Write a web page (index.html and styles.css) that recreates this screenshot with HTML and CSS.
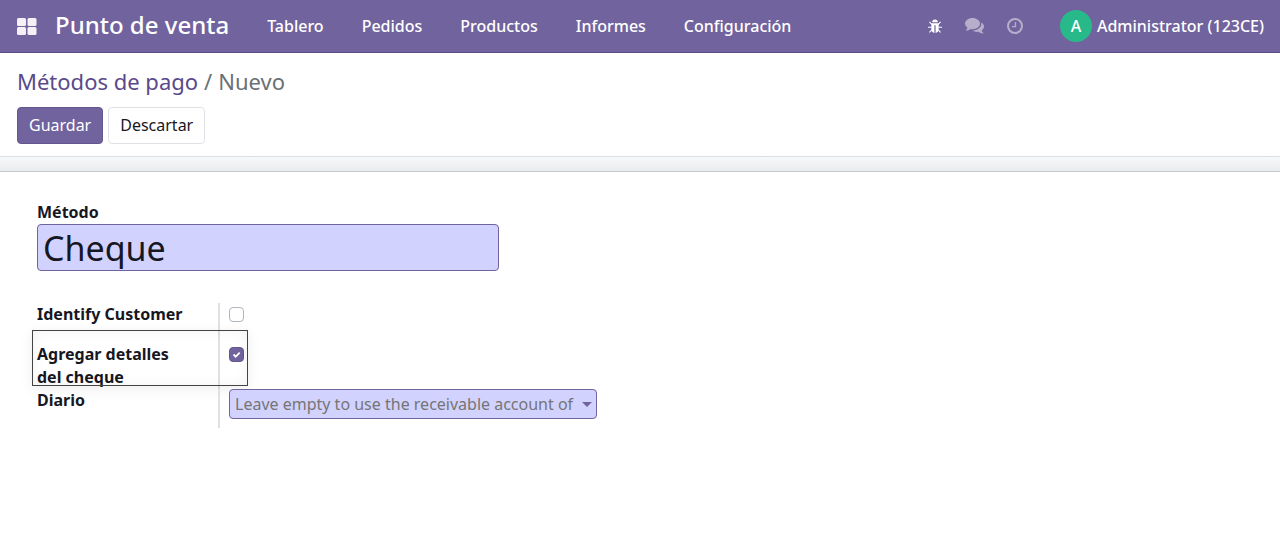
FILE: index.html
```html
<!DOCTYPE html>
<html lang="es">
<head>
<meta charset="utf-8">
<meta name="viewport" content="width=device-width, initial-scale=1">
<title>Métodos de pago</title>
<link rel="stylesheet" href="styles.css">
</head>
<body>
<header class="navbar">
  <button class="apps" type="button" aria-label="Aplicaciones">
    <svg width="20" height="17" viewBox="0 0 20 17" fill="#f3f1f6"><rect width="9" height="8" rx="1.5"/><rect x="10.5" width="9" height="8" rx="1.5"/><rect y="9" width="9" height="8" rx="1.5"/><rect x="10.5" y="9" width="9" height="8" rx="1.5"/></svg>
  </button>
  <a class="brand" href="#">Punto de venta</a>
  <nav class="menu">
    <a href="#">Tablero</a>
    <a href="#">Pedidos</a>
    <a href="#">Productos</a>
    <a href="#">Informes</a>
    <a href="#">Configuración</a>
  </nav>
  <div class="systray">
    <button type="button" aria-label="Depurar">
      <svg width="14" height="15" viewBox="0 0 14 15" fill="#fff" stroke="#fff"><path d="M4.200 3.200a2.800 2.800 0 0 1 5.600 0z" stroke="none"/><path d="M3.300 4.200h7.400v5.600c0 2.400-1.400 4-3.100 4.100V6.200H6.400v7.700C4.700 13.800 3.300 12.200 3.300 9.800z" stroke="none"/><path d="M3.800 5.400 1.400 2.900M10.200 5.400l2.400-2.500M3.500 8.300H0M10.500 8.300H14M3.800 10.800l-2.300 2.500M10.200 10.800l2.300 2.500" stroke-width="1.100" fill="none"/></svg>
    </button>
    <button type="button" aria-label="Mensajes">
      <svg width="19" height="16" viewBox="0 0 19 16" fill="#b7aecb"><path d="M7.500 0C11.600 0 15 2.500 15 5.600s-3.400 5.600-7.500 5.600c-.7 0-1.300-.1-1.900-.2C4.300 12 2.900 12.500 1.100 12.600c-.4 0-.5-.4-.2-.6.8-.7 1.300-1.300 1.600-2.300C1 8.700 0 7.200 0 5.600 0 2.500 3.400 0 7.500 0z"/><path d="M16.200 4.600C17.900 5.500 19 6.900 19 8.600c0 1.600-.9 2.900-2.400 3.900.3 1 .8 1.600 1.600 2.300.3.200.1.600-.2.600-1.800-.1-3.200-.6-4.500-1.600-2.300.4-4.500-.1-6.100-1.300 4.900 0 8.900-2.900 8.900-6.800 0-.4 0-.7-.1-1.100z"/></svg>
    </button>
    <button type="button" aria-label="Actividades">
      <svg width="16" height="16" viewBox="0 0 16 16" fill="none" stroke="#b7aecb"><circle cx="8" cy="8" r="7" stroke-width="2"/><path d="M8.500 4v4.700H5" stroke-width="1.300"/></svg>
    </button>
    <button class="user" type="button"><span class="avatar">A</span><span>Administrator (123CE)</span></button>
  </div>
</header>
<section class="control-panel">
  <div class="breadcrumb"><a href="#">Métodos de pago</a><span class="slash">/</span><span class="current">Nuevo</span></div>
  <div class="actions">
    <button class="btn primary" type="submit" form="method-form">Guardar</button>
    <button class="btn" type="button">Descartar</button>
  </div>
</section>
<main class="content">
  <form class="sheet" id="method-form">
    <div class="title">
      <label for="method">Método</label>
      <input id="method" class="title-input" type="text" value="Cheque">
    </div>
    <div class="group">
      <div class="row">
        <label for="identify">Identify Customer</label>
        <div class="value"><input id="identify" type="checkbox"></div>
      </div>
      <div class="row highlighted">
        <label for="details">Agregar detalles del cheque</label>
        <div class="value"><input id="details" type="checkbox" checked></div>
      </div>
      <div class="row">
        <label for="journal">Diario</label>
        <div class="value"><select id="journal"><option>Leave empty to use the receivable account of</option></select></div>
      </div>
    </div>
  </form>
</main>
</body>
</html>
```
FILE: styles.css
```css
*, *::after { box-sizing: border-box; }
body {
  margin: 0;
  min-height: 100vh;
  display: flex;
  flex-direction: column;
  background: #fff;
  color: #17171f;
  font-family: "Noto Sans", sans-serif;
  font-size: 16px;
  line-height: 23px;
}
button, input, select { font: inherit; color: inherit; }
a { text-decoration: none; }

.navbar {
  display: flex;
  align-items: center;
  padding: 0 16px 0 17px;
  background: #71639e;
  border-bottom: 1px solid #5a4a88;
  color: #fff;
  white-space: nowrap;
}
.navbar a { color: #fff; }
.navbar button {
  display: flex;
  align-items: center;
  padding: 0;
  border: 0;
  background: none;
}
.brand {
  margin-left: 18px;
  padding-bottom: 2px;
  font-size: 24px;
  font-weight: 500;
  line-height: 50px;
}
.menu { display: flex; gap: 38px; margin-left: 38px; font-weight: 500; }
.systray { display: flex; align-items: center; gap: 23px; margin-left: auto; }
.navbar .user { gap: 5px; margin-left: 14px; font-weight: 500; }
.avatar {
  width: 32px;
  line-height: 32px;
  border-radius: 50%;
  background: #28b98a;
  text-align: center;
}

.control-panel {
  padding: 13px 17px 12px;
  border-bottom: 1px solid #dcdfe3;
}
.breadcrumb {
  display: flex;
  gap: 6px;
  font-size: 22px;
  line-height: 30px;
}
.breadcrumb a { color: #5a4a8a; }
.slash, .current { color: #6b7075; }
.actions { display: flex; gap: 5px; margin-top: 11px; }
.btn {
  padding: 6px 11px;
  border: 1px solid #dee2e6;
  border-radius: 4px;
  background: #fff;
  line-height: 23px;
}
.btn.primary { border-color: #65568f; background: #71639e; color: #fff; }

.content {
  flex: 1;
  display: flex;
  flex-direction: column;
  padding-top: 14px;
  background: linear-gradient(#f7f8f9, #eaecee 14px);
}
.sheet {
  flex: 1;
  padding: 29px 37px;
  border-top: 1px solid #c6c8d0;
  background: #fff;
}
label { font-weight: 700; }
.title { display: flex; flex-direction: column; max-width: 462px; }
.title-input {
  width: 100%;
  height: 47px;
  padding: 0 5px;
  border: 1px solid #71639e;
  border-radius: 4px;
  background: #d2d2ff;
  font-size: 34px;
}
.group { max-width: 560px; margin-top: 32px; }
.row {
  display: grid;
  grid-template-columns: 183px 1fr;
  position: relative;
}
.row label { padding-right: 32px; border-right: 2px solid #e0e0e0; }
.row:first-child label { padding-bottom: 17px; }
.row:last-child label { padding-bottom: 16px; }
.value { display: flex; align-items: flex-start; padding-left: 9px; }
.highlighted::after {
  content: "";
  position: absolute;
  inset: -13px auto 3px -5px;
  width: 216px;
  border: 1px solid #444;
  box-shadow: 0 3px 12px rgba(0, 0, 0, .07), inset 0 0 14px rgba(0, 0, 0, .05);
  pointer-events: none;
}
input[type="checkbox"] {
  appearance: none;
  width: 15px;
  height: 15px;
  margin: 4px 0 0;
  border: 1px solid #adb5bd;
  border-radius: 4px;
  background: #fff;
}
input[type="checkbox"]:checked {
  border-color: #65568f;
  background: #71639e url("data:image/svg+xml,%3Csvg xmlns='http://www.w3.org/2000/svg' viewBox='0 0 13 13'%3E%3Cpath d='M3.500 6.500l2.200 2.200 4-4' fill='none' stroke='white' stroke-width='1.800'/%3E%3C/svg%3E") center / 13px 13px no-repeat;
}
select {
  appearance: none;
  width: 100%;
  height: 30px;
  padding: 0 16px 0 5px;
  border: 1px solid #71639e;
  border-radius: 4px;
  background: #d2d2ff url("data:image/svg+xml,%3Csvg xmlns='http://www.w3.org/2000/svg' viewBox='0 0 10 5'%3E%3Cpath d='M0 0h10L5 5z' fill='%2371639e'/%3E%3C/svg%3E") right 4px center / 10px 5px no-repeat;
  color: #757575;
}
```
